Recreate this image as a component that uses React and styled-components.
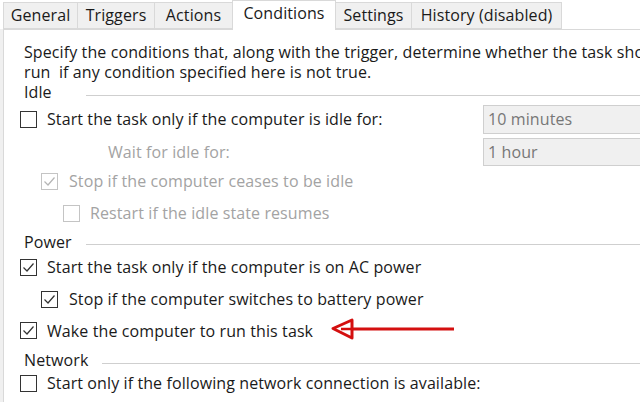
import React from "react";
import styled, { createGlobalStyle } from "styled-components";

const Global = createGlobalStyle`
  html, body { margin: 0; padding: 0; background: #ffffff; }
  body { font-family: "Open Sans", "Noto Sans", sans-serif; }
`;

const Frame = styled.div`
  position: relative;
  width: 640px;
  height: 402px;
  overflow: hidden;
  background: #ffffff;
  color: #1a1a1a;
  font-size: 16px;
  letter-spacing: 0.1px;
`;

const TabStrip = styled.div`
  display: flex;
  align-items: flex-end;
  height: 29px;
  padding-left: 4px;
  position: relative;
  z-index: 1;
`;

const Tab = styled.div`
  box-sizing: border-box;
  width: ${(p) => p.$w}px;
  height: ${(p) => (p.$active ? 30 : 27)}px;
  margin-bottom: ${(p) => (p.$active ? -1 : 0)}px;
  margin-left: -1px;
  display: flex;
  align-items: center;
  justify-content: center;
  padding-bottom: ${(p) => (p.$active ? 5 : 2)}px;
  background: ${(p) => (p.$active ? "#ffffff" : "#f0f0f0")};
  border: 1px solid #d9d9d9;
  border-bottom: ${(p) => (p.$active ? "none" : "1px solid #d9d9d9")};
  color: #1a1a1a;
  white-space: nowrap;
`;

const Panel = styled.div`
  position: relative;
  height: 373px;
  border-top: 1px solid #d9d9d9;
  border-left: 1px solid #d9d9d9;
  margin-left: 3px;
  box-shadow: -3px 0 0 #f0f0f0;
  padding-top: 12px;
  box-sizing: border-box;
  display: flex;
  flex-direction: column;
`;

const Description = styled.div`
  padding-left: 20px;
  line-height: 20px;
  white-space: pre;
`;

const SectionHeader = styled.div`
  display: flex;
  align-items: center;
  height: ${(p) => p.$h}px;
  margin-top: ${(p) => p.$mt || 0}px;
  padding-left: 20px;
  gap: 14px;
  white-space: nowrap;
`;

const HeaderText = styled.span`
  min-width: 48px;
`;

const Rule = styled.div`
  flex: 1;
  height: 1px;
  margin-top: 6px;
  background: #cfcfcf;
`;

const Row = styled.div`
  display: flex;
  align-items: center;
  height: ${(p) => p.$h}px;
  margin-top: ${(p) => p.$mt || 0}px;
  padding-left: ${(p) => p.$indent}px;
  white-space: nowrap;
  color: ${(p) => (p.$disabled ? "#a3a3a3" : "#1a1a1a")};
`;

const FieldRow = styled(Row)`
  position: relative;
`;

const Label = styled.span`
  margin-left: ${(p) => (p.$gap != null ? p.$gap : 10)}px;
`;

const BoxWrap = styled.span`
  box-sizing: border-box;
  width: 17px;
  height: 17px;
  flex: none;
  border: 1px solid ${(p) => (p.$disabled ? "#c4c4c4" : "#333333")};
  background: #ffffff;
  display: inline-flex;
  align-items: center;
  justify-content: center;
`;

const Field = styled.div`
  position: absolute;
  left: 479px;
  box-sizing: border-box;
  width: 200px;
  height: ${(p) => p.$h}px;
  background: #f0f0f0;
  border: 1px solid #cfcfcf;
  color: #777777;
  display: flex;
  align-items: center;
  padding-left: 4px;
`;

const Arrow = styled.svg`
  position: absolute;
  left: 322px;
  top: 286px;
  overflow: visible;
`;

function CheckBox({ checked, disabled }) {
  const c = disabled ? "#b5b5b5" : "#333333";
  return (
    <BoxWrap $disabled={disabled}>
      {checked && (
        <svg width="13" height="13" viewBox="0 0 13 13">
          <path d="M1.5 6.5 L5 10 L11.5 2.5" fill="none" stroke={c} strokeWidth="1.2" />
        </svg>
      )}
    </BoxWrap>
  );
}

const tabs = [
  { t: "General", w: 75 },
  { t: "Triggers", w: 78 },
  { t: "Actions", w: 79 },
  { t: "Conditions", w: 104, active: true },
  { t: "Settings", w: 77 },
  { t: "History (disabled)", w: 151 },
];

export default function App() {
  return (
    <Frame>
      <Global />
      <TabStrip>
        {tabs.map((x) => (
          <Tab key={x.t} $w={x.w} $active={x.active}>
            {x.t}
          </Tab>
        ))}
      </TabStrip>
      <Panel>
        <Description>
          {"Specify the conditions that, along with the trigger, determine whether the task should not\nrun  if any condition specified here is not true."}
        </Description>
        <SectionHeader $h={20}>
          <HeaderText>Idle</HeaderText>
          <Rule />
        </SectionHeader>
        <FieldRow $h={32} $indent={16} $mt={1}>
          <CheckBox />
          <Label>Start the task only if the computer is idle for:</Label>
          <Field $h={29}>10 minutes</Field>
        </FieldRow>
        <FieldRow $h={34} $indent={104} $disabled>
          <Label $gap={0}>Wait for idle for:</Label>
          <Field $h={28}>1 hour</Field>
        </FieldRow>
        <Row $h={24} $indent={37} $disabled>
          <CheckBox checked disabled />
          <Label $gap={11}>Stop if the computer ceases to be idle</Label>
        </Row>
        <Row $h={32} $indent={59} $mt={4} $disabled>
          <CheckBox disabled />
          <Label>Restart if the idle state resumes</Label>
        </Row>
        <SectionHeader $h={19} $mt={3}>
          <HeaderText>Power</HeaderText>
          <Rule />
        </SectionHeader>
        <Row $h={32} $indent={16}>
          <CheckBox checked />
          <Label>Start the task only if the computer is on AC power</Label>
        </Row>
        <Row $h={32} $indent={37}>
          <CheckBox checked />
          <Label $gap={11}>Stop if the computer switches to battery power</Label>
        </Row>
        <Row $h={31} $indent={16}>
          <CheckBox checked />
          <Label>Wake the computer to run this task</Label>
        </Row>
        <SectionHeader $h={20} $mt={4}>
          <HeaderText>Network</HeaderText>
          <Rule />
        </SectionHeader>
        <Row $h={26} $indent={16}>
          <CheckBox />
          <Label>Start only if the following network connection is available:</Label>
        </Row>
        <Arrow width="130" height="26" viewBox="0 0 130 26">
          <line x1="24" y1="13" x2="128" y2="13" stroke="#d40f0f" strokeWidth="3" />
          <polygon points="7,12.5 26,4 26,22" fill="#ffffff" stroke="#d40f0f" strokeWidth="3" strokeLinejoin="round" />
          <line x1="15" y1="13" x2="26" y2="13" stroke="#d40f0f" strokeWidth="2.5" />
        </Arrow>
      </Panel>
    </Frame>
  );
}
